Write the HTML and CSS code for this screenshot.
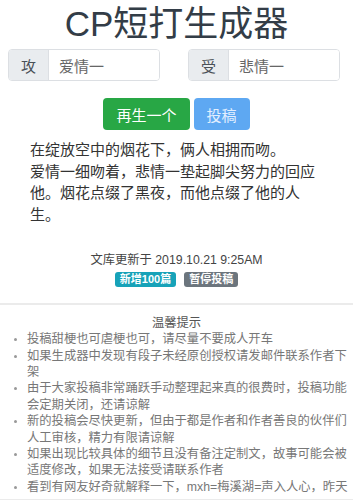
FILE: index.html
```html
<!DOCTYPE html>
<html lang="zh">
<head>
    <meta charset="UTF-8">
    <title>CP短打生成器</title>
    <link rel="stylesheet" href="styles.css">
</head>
<body>
    <h1 class="title">CP短打生成器</h1>

    <div class="pair">
        <div class="group">
            <span class="group-label">攻</span>
            <input class="group-input" type="text" id="gong" value="爱情一">
        </div>
        <div class="group">
            <span class="group-label">受</span>
            <input class="group-input" type="text" id="shou" value="悲情一">
        </div>
    </div>

    <div class="actions">
        <button class="btn btn-green">再生一个</button>
        <button class="btn btn-blue">投稿</button>
    </div>

    <p class="story">在绽放空中的烟花下，俩人相拥而吻。<br>爱情一细吻着，悲情一垫起脚尖努力的回应他。烟花点缀了黑夜，而他点缀了他的人生。</p>

    <div class="updated">文库更新于 2019.10.21 9:25AM</div>
    <div class="badges">
        <span class="badge badge-teal">新增100篇</span>
        <span class="badge badge-grey">暂停投稿</span>
    </div>

    <div class="tips">
        <div class="tips-title">温馨提示</div>
        <ul class="tips-list">
            <li>投稿甜梗也可虐梗也可，请尽量不要成人开车</li>
            <li>如果生成器中发现有段子未经原创授权请发邮件联系作者下架</li>
            <li>由于大家投稿非常踊跃手动整理起来真的很费时，投稿功能会定期关闭，还请谅解</li>
            <li>新的投稿会尽快更新，但由于都是作者和作者善良的伙伴们人工审核，精力有限请谅解</li>
            <li>如果出现比较具体的细节且没有备注定制文，故事可能会被适度修改，如果无法接受请联系作者</li>
            <li>看到有网友好奇就解释一下，mxh=梅溪湖=声入人心，昨天</li>
        </ul>
    </div>
</body>
</html>
```

FILE: styles.css
```css
body {
    margin: 0;
    font-family: "Liberation Sans", "Noto Sans CJK SC", sans-serif;
    color: #333;
    background: white;
}
.title {
    margin: 0;
    height: 47px;
    line-height: 48px;
    font-size: 35px;
    font-weight: normal;
    text-align: center;
    color: #333d47;
}
.pair {
    display: flex;
    gap: 28px;
    padding: 2px 13px 0 8px;
}
.group {
    flex: 1;
    display: flex;
    height: 32px;
    box-sizing: border-box;
    border: 1px solid #dcdfe3;
    border-radius: 4px;
    overflow: hidden;
}
.group-label {
    width: 39px;
    display: flex;
    align-items: center;
    justify-content: center;
    background: #e9ecef;
    border-right: 1px solid #dcdfe3;
    font-size: 15px;
    color: #495057;
}
.group-input {
    flex: 1;
    min-width: 0;
    border: none;
    padding: 0 10px;
    font-family: inherit;
    font-size: 15px;
    color: #666;
    outline: none;
}
.actions {
    display: flex;
    justify-content: center;
    gap: 4px;
    margin-top: 17px;
}
.btn {
    height: 32px;
    padding: 0 13px;
    border: none;
    border-radius: 4px;
    font-family: inherit;
    font-size: 15px;
    color: white;
    cursor: pointer;
}
.btn-green {
    background: #28a745;
}
.btn-blue {
    background: #5ea8f2;
    color: #e3efff;
}
.story {
    width: 293px;
    margin: 9px auto 0;
    font-size: 15px;
    line-height: 21.7px;
    color: #333;
}
.updated {
    margin-top: 25px;
    text-align: center;
    font-size: 12.3px;
    line-height: 18px;
    color: #444;
}
.badges {
    margin-top: 3px;
    text-align: center;
    font-size: 0;
}
.badge {
    display: inline-block;
    margin: 0 4px;
    padding: 0 5px;
    line-height: 15px;
    border-radius: 3px;
    font-size: 11px;
    font-weight: bold;
    color: white;
}
.badge-teal {
    background: #17a2b8;
}
.badge-grey {
    background: #6c757d;
}
.tips {
    margin-top: 16px;
    padding: 10px 0 4px;
    border-top: 2px solid #ebebeb;
    border-bottom: 2px solid #ebebeb;
}
.tips-title {
    text-align: center;
    font-size: 12.3px;
    line-height: 16.4px;
    color: #555;
}
.tips-list {
    margin: 0;
    padding: 0 1px 0 27px;
    font-size: 12.3px;
    line-height: 16.4px;
    color: #777;
}
.tips-list li::marker {
    color: #999;
    font-size: 10px;
}
```
